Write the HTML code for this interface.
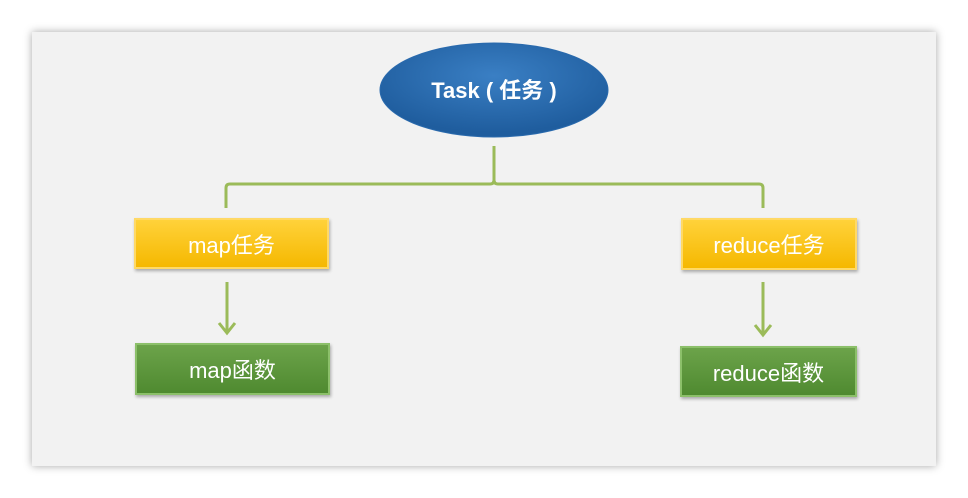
<!DOCTYPE html>
<html><head><meta charset="utf-8"><style>
body{margin:0;width:968px;height:498px;background:#fff;position:relative;overflow:hidden;font-family:"Liberation Sans","Noto Sans CJK SC",sans-serif}
.slide{position:absolute;left:32px;top:32px;width:904px;height:434px;background:#f2f2f2;box-shadow:0 0 8px rgba(0,0,0,.35)}
.box{position:absolute;display:flex;align-items:center;justify-content:center;color:#fff;font-size:22px;box-shadow:1px 2px 3px rgba(0,0,0,.3)}
.y{background:linear-gradient(#ffd23a,#f5b800);border:2px solid #ffd966;box-sizing:border-box}
.g{background:linear-gradient(#6ca34a,#4f8a30);border:2px solid #8cc06a;box-sizing:border-box}
</style></head><body>
<div class="slide"></div>
<svg style="position:absolute;left:0;top:0" width="968" height="498">
<defs><radialGradient id="e" cx="50%" cy="35%" r="60%"><stop offset="0" stop-color="#3a7fc4"/><stop offset="1" stop-color="#1f5d9e"/></radialGradient></defs>
<ellipse cx="494" cy="90" rx="114" ry="47" fill="url(#e)" stroke="#2a6aad"/>
<text x="494" y="98" text-anchor="middle" fill="#fff" font-size="22" font-weight="bold" font-family="Liberation Sans,Noto Sans CJK SC,sans-serif">Task ( 任务 )</text>
<g stroke="#9bbb59" stroke-width="3" fill="none">
<path d="M494 146 V180 Q494 184 490 184 H230 Q226 184 226 188 V208"/>
<path d="M494 180 Q494 184 498 184 H759 Q763 184 763 188 V208"/>
<path d="M227 282 V333 M219 323 L227 333 L235 323"/>
<path d="M763 282 V335 M755 325 L763 335 L771 325"/>
</g></svg>
<div class="box y" style="left:134px;top:218px;width:195px;height:51px">map任务</div>
<div class="box g" style="left:135px;top:343px;width:195px;height:52px">map函数</div>
<div class="box y" style="left:681px;top:218px;width:176px;height:52px">reduce任务</div>
<div class="box g" style="left:680px;top:346px;width:177px;height:51px">reduce函数</div>
</body></html>
